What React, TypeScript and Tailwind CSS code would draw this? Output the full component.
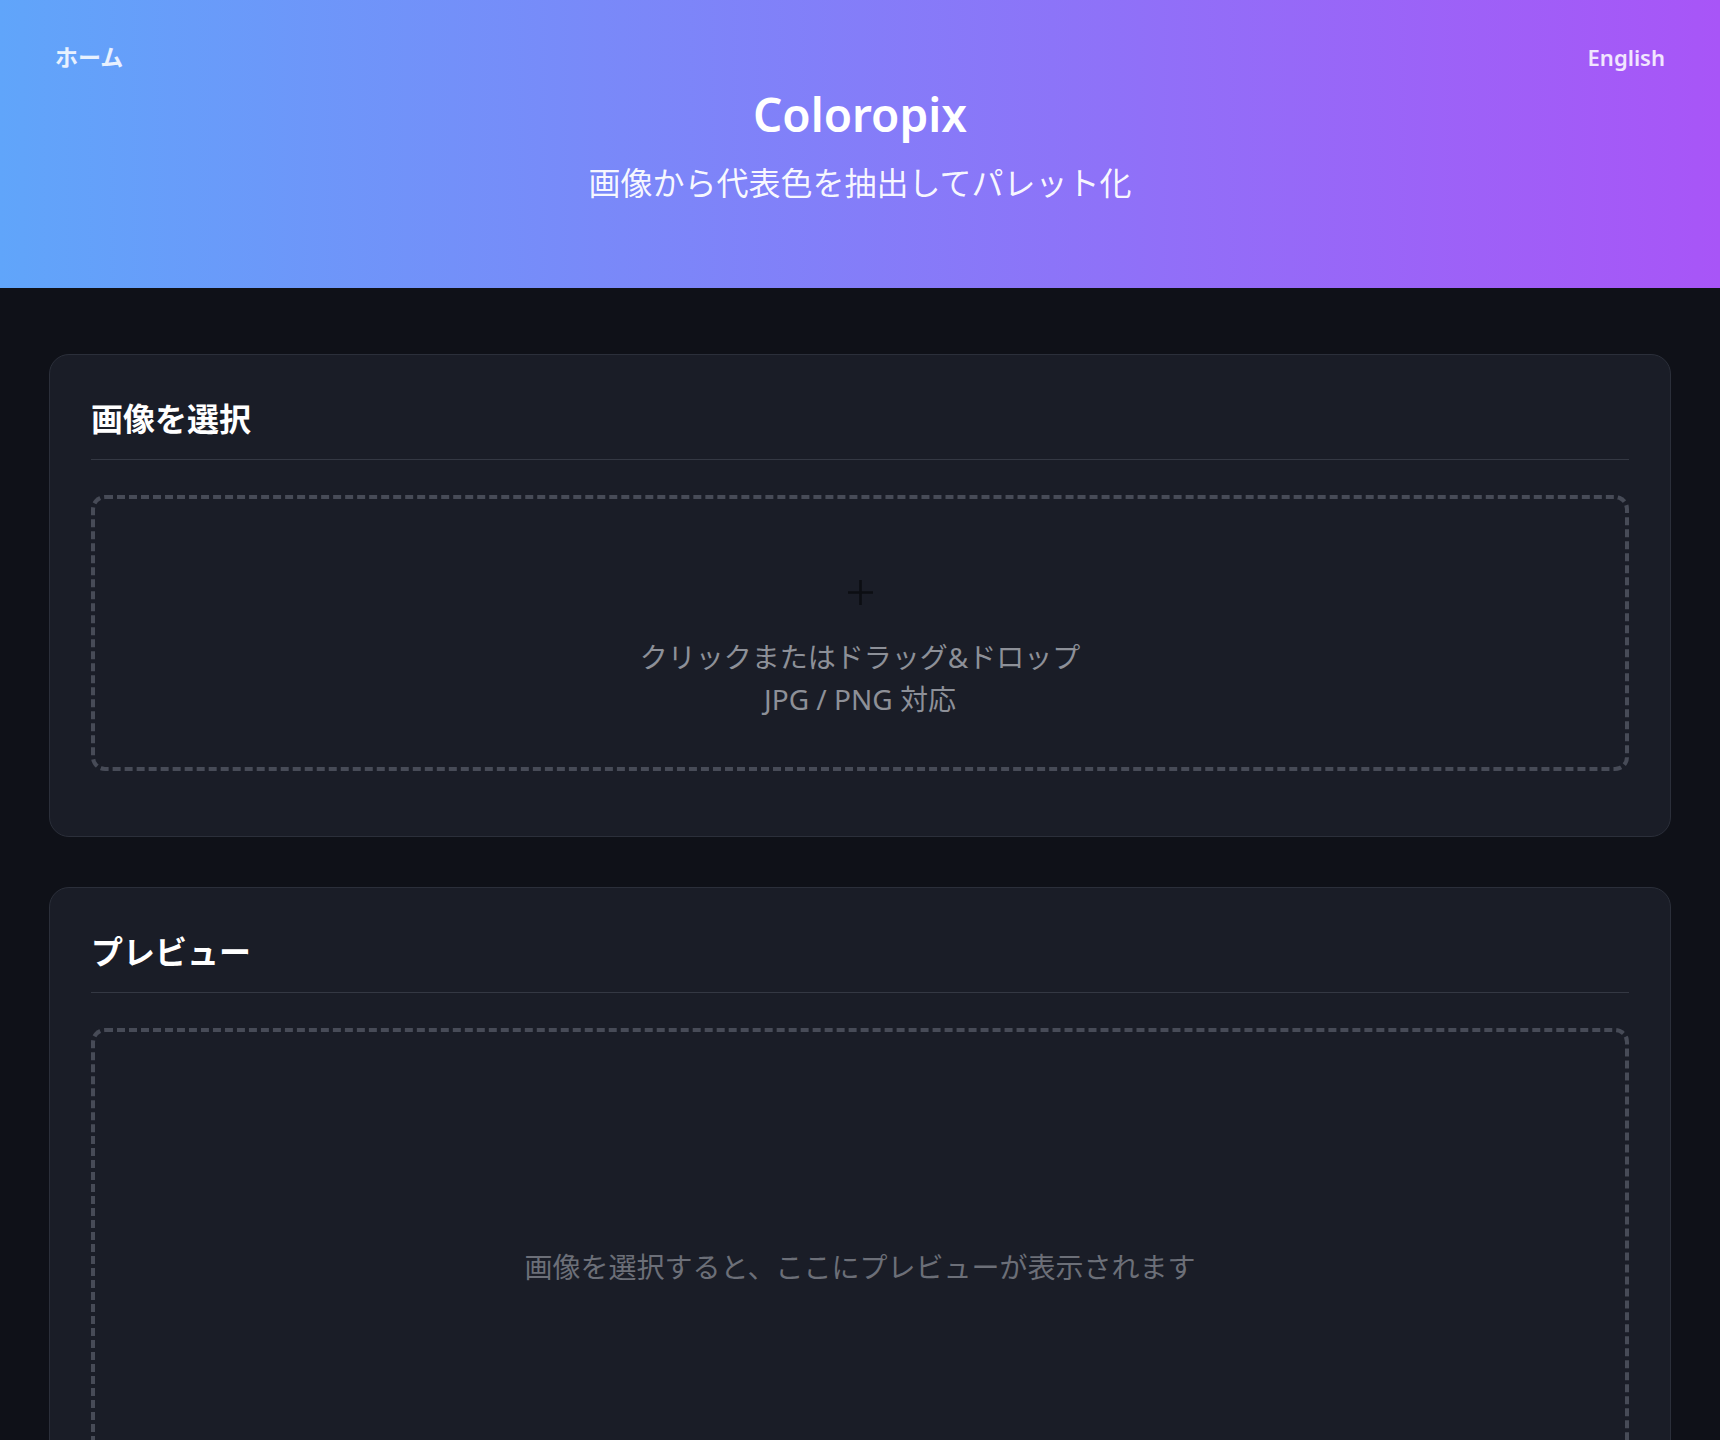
import React from "react";

const FONT = '"Noto Sans", "Noto Sans CJK JP", sans-serif';

function Card({ title, children }: { title: string; children: React.ReactNode }) {
  return (
    <section className="rounded-[20px] border border-[#2b2f3a] bg-[#1a1d27] px-[41px] pt-[40px] pb-[65px]">
      <h2 className="border-b border-[#343843] pb-[16px] text-[32px] leading-[48px] font-bold text-white">
        {title}
      </h2>
      {children}
    </section>
  );
}

export default function App() {
  return (
    <div className="min-h-screen bg-[#0f1118]" style={{ fontFamily: FONT }}>
      <header className="h-[288px] bg-[linear-gradient(to_right,#60a5fa,#a855f7)] px-[55px] pt-[40px] text-white">
        <nav className="flex items-center justify-between text-[22px] leading-[34px]">
          <a className="text-[23px] text-white/85 font-semibold">ホーム</a>
          <a className="text-white/85 font-semibold">English</a>
        </nav>
        <div className="mt-[12px] flex flex-col items-center">
          <h1 className="text-[46px] leading-[56px] font-semibold text-white">Coloropix</h1>
          <p className="mt-[17px] text-[32px] leading-[48px] text-white/95">
            画像から代表色を抽出してパレット化
          </p>
        </div>
      </header>

      <main className="flex flex-col gap-[50px] px-[49px] pt-[66px] pb-[60px]">
        <Card title="画像を選択">
          <div className="mt-[35px] flex flex-col items-center rounded-[14px] border-4 border-dashed border-[#474b57] pt-[81px] pb-[47px]">
            <svg width="25" height="25" viewBox="0 0 25 25" className="block">
              <path d="M12.5 0 V25 M0 12.5 H25" stroke="#0c0e13" strokeWidth="2.6" />
            </svg>
            <div className="mt-[31px] flex flex-col items-center text-[28px] leading-[42px] text-[#8d9098]">
              <span>クリックまたはドラッグ&amp;ドロップ</span>
              <span>JPG / PNG 対応</span>
            </div>
          </div>
        </Card>

        <Card title="プレビュー">
          <div className="mt-[35px] flex h-[478px] items-center justify-center rounded-[14px] border-4 border-dashed border-[#474b57]">
            <span className="text-[28px] leading-[42px] text-[#6c6f78]">
              画像を選択すると、ここにプレビューが表示されます
            </span>
          </div>
        </Card>
      </main>
    </div>
  );
}
